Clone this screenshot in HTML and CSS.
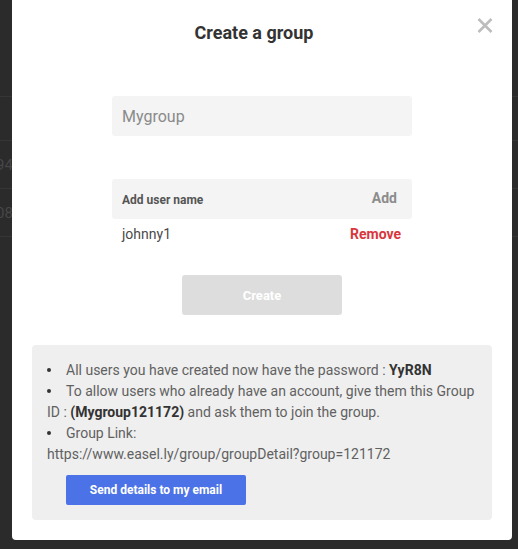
FILE: index.html
```html
<!DOCTYPE html>
<html lang="en">
<head>
  <meta charset="UTF-8">
  <meta name="viewport" content="width=device-width, initial-scale=1.0">
  <title>Create a group</title>
  <link rel="stylesheet" href="styles.css">
</head>
<body>

  <div id="backdrop">
    <div class="row head"></div>
    <div class="row"></div>
    <div class="row"><span class="cell">947</span></div>
    <div class="row"><span class="cell">08</span></div>
  </div>

  <div id="overlay">
    <div id="modal">
      <div class="modal-head">
        <h2>Create a group</h2>
        <button class="close" aria-label="Close">
          <svg width="16" height="15" viewBox="0 0 16 15">
            <path d="M1.5 1 L14.5 14 M14.5 1 L1.5 14" stroke="#bdbdbd" stroke-width="2.6" fill="none"/>
          </svg>
        </button>
      </div>

      <div class="form">
        <input type="text" class="field name" placeholder="Mygroup">

        <div class="field add-row">
          <span class="add-label">Add user name</span>
          <span class="add-btn">Add</span>
        </div>

        <div class="user">
          <span>johnny1</span>
          <span class="remove">Remove</span>
        </div>

        <button class="create">Create</button>
      </div>

      <div class="info">
        <p class="item">All users you have created now have the password : <b>YyR8N</b></p>
        <p class="item">To allow users who already have an account, give them this Group ID : <b>(Mygroup121172)</b> and ask them to join the group.</p>
        <p class="item">Group Link:<br>https://www.easel.ly/group/groupDetail?group=121172</p>
        <button class="send">Send details to my email</button>
      </div>
    </div>
  </div>

</body>
</html>
```

FILE: styles.css
```css
body {
  margin: 0;
  height: 549px;
  overflow: hidden;
  background-color: #2b2b2b;
  font-family: 'Roboto', 'Liberation Sans', sans-serif;
}

#backdrop .row {
  height: 47px;
  border-bottom: 1px solid #363636;
  display: flex;
  align-items: center;
}

#backdrop .row.head {
  height: 96px;
}

#backdrop .row:nth-child(2) {
  height: 43px;
}

#backdrop .cell {
  margin-left: -4px;
  font-size: 15px;
  color: #474747;
}

#overlay {
  position: fixed;
  top: 0;
  left: 0;
  right: 0;
}

#modal {
  box-sizing: border-box;
  width: 500px;
  margin: -4px 0 0 12px;
  padding: 0 20px 20px;
  background-color: #ffffff;
  border-radius: 4px;
  position: relative;
}

.modal-head h2 {
  margin: 0 16px 0 0;
  padding-top: 26px;
  font-size: 18px;
  line-height: 22px;
  font-weight: 700;
  color: #333333;
  text-align: center;
}

.close {
  position: absolute;
  top: 22px;
  right: 19px;
  padding: 0;
  border: none;
  background: none;
  cursor: pointer;
  line-height: 0;
}

.form {
  width: 300px;
  margin: 52px auto 0;
}

.field {
  box-sizing: border-box;
  width: 300px;
  height: 40px;
  background-color: #f4f4f4;
  border: none;
  border-radius: 3px;
}

input.name {
  display: block;
  padding: 0 10px;
  font-family: inherit;
  font-size: 16px;
  outline: none;
}

input.name::placeholder {
  color: #8a8a8a;
}

.add-row {
  margin-top: 43px;
  display: flex;
  align-items: center;
  justify-content: space-between;
  padding: 0 15px 0 10px;
}

.add-label {
  font-size: 12px;
  font-weight: 700;
  color: #555555;
  padding-top: 2px;
}

.add-btn {
  font-size: 14px;
  font-weight: 700;
  color: #8c8c8c;
  margin-top: -2px;
}

.user {
  height: 30px;
  display: flex;
  align-items: center;
  justify-content: space-between;
  padding: 0 11px 0 10px;
  font-size: 14px;
  color: #4a4a4a;
}

.remove {
  font-weight: 700;
  color: #d9363e;
}

.create {
  display: block;
  width: 160px;
  height: 40px;
  margin: 26px auto 0;
  border: none;
  border-radius: 3px;
  background-color: #dddddd;
  color: #ffffff;
  font-family: inherit;
  font-size: 13px;
  font-weight: 700;
}

.info {
  margin-top: 30px;
  padding: 15px;
  background-color: #efefef;
  border-radius: 4px;
  font-size: 14px;
  line-height: 21px;
  color: #616161;
}

.info p {
  margin: 0;
}

.info b {
  color: #333333;
}

.item::before {
  content: "";
  display: inline-block;
  width: 4px;
  height: 4px;
  margin: 0 15px 3px 0;
  border-radius: 50%;
  background-color: #333333;
  vertical-align: middle;
}

.send {
  display: block;
  width: 180px;
  height: 30px;
  margin: 10px 0 0 19px;
  border: none;
  border-radius: 2px;
  background-color: #4b72e6;
  color: #ffffff;
  font-family: inherit;
  font-size: 12px;
  font-weight: 700;
  cursor: pointer;
}
```
